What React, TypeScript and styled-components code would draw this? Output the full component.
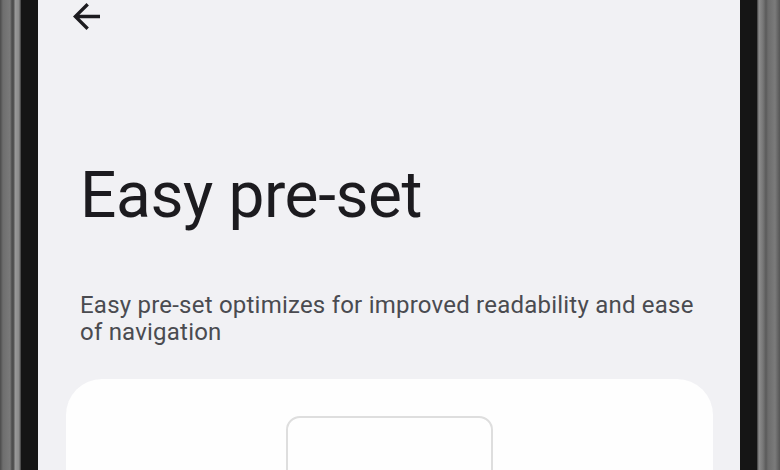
import React from 'react';
import styled, { createGlobalStyle } from 'styled-components';

const GlobalStyle = createGlobalStyle`
  html, body {
    margin: 0;
    padding: 0;
    background: #141414;
    overflow: hidden;
  }
`;

const Phone = styled.div`
  display: flex;
  width: 780px;
  height: 470px;
`;

const Bezel = styled.div<{ $side: 'left' | 'right' }>`
  width: ${({ $side }) => ($side === 'left' ? '21px' : '23px')};
  background: ${({ $side }) =>
    $side === 'left'
      ? 'linear-gradient(90deg, #4a4a4a 0px, #6e6e6e 3px, #7a7a7a 10px, #4c4c4c 12px, #555 14px, #9a9a9a 15px, #8a8a8a 19px, #3a3a3a 21px)'
      : 'linear-gradient(90deg, #3a3a3a 0px, #8d8d8d 2px, #777 6px, #5a5a5a 9px, #6c6c6c 11px, #7b7b7b 18px, #555 23px)'};
`;

const Rim = styled.div`
  width: 17px;
  background: #151515;
`;

const Screen = styled.main`
  flex: 1;
  background: #f1f1f4;
  display: flex;
  flex-direction: column;
  padding: 0 27px 0 28px;
  font-family: Roboto, 'Noto Sans', sans-serif;
  overflow: hidden;
`;

const TopBar = styled.div`
  height: 30px;
  padding: 3px 0 0 7px;
`;

const BackButton = styled.button`
  border: none;
  background: none;
  padding: 0;
  width: 27px;
  height: 27px;
  color: #1c1b1f;
  display: block;
`;

const Title = styled.h1`
  margin: 128px 0 0 14px;
  font-size: 64px;
  line-height: 76px;
  font-weight: 400;
  color: #1c1b1f;
  letter-spacing: -0.4px;
`;

const Description = styled.p`
  margin: 58px 0 0 14px;
  font-size: 24px;
  line-height: 27px;
  letter-spacing: 0.22px;
  color: #4a4b50;
  max-width: 630px;
`;

const Card = styled.section`
  margin-top: 33px;
  background: #fefefe;
  border-radius: 36px 36px 0 0;
  flex: 1;
  display: flex;
  justify-content: center;
  padding-top: 37px;
`;

const Preview = styled.div`
  width: 203px;
  height: 120px;
  border: 2px solid #dedede;
  border-radius: 14px;
`;

const ArrowBack = () => (
  <svg width="27" height="27" viewBox="4 4 16 16" fill="currentColor">
    <path d="M20 11H7.83l5.59-5.59L12 4l-8 8 8 8 1.41-1.41L7.83 13H20v-2z" />
  </svg>
);

const App: React.FC = () => (
  <>
    <GlobalStyle />
    <Phone>
      <Bezel $side="left" />
      <Rim />
      <Screen>
        <TopBar>
          <BackButton aria-label="Back">
            <ArrowBack />
          </BackButton>
        </TopBar>
        <Title>Easy pre-set</Title>
        <Description>
          Easy pre-set optimizes for improved readability and ease of navigation
        </Description>
        <Card>
          <Preview />
        </Card>
      </Screen>
      <Rim />
      <Bezel $side="right" />
    </Phone>
  </>
);

export default App;
